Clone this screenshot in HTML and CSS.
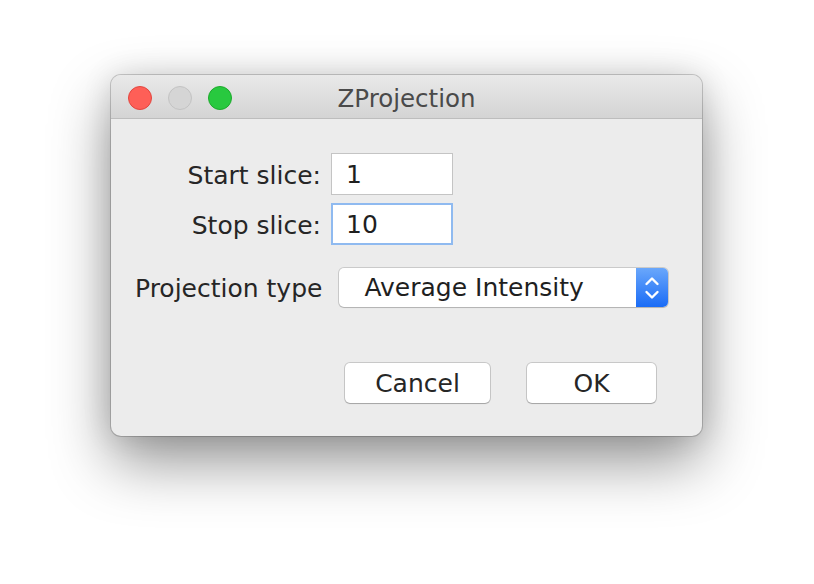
FILE: index.html
```html
<!DOCTYPE html>
<html>
<head>
<meta charset="utf-8">
<link rel="stylesheet" href="styles.css">
</head>
<body>
<div class="page">
  <div class="window">
    <div class="titlebar">
      <div class="lights">
        <span class="light red"></span>
        <span class="light grey"></span>
        <span class="light green"></span>
      </div>
      <div class="title">ZProjection</div>
    </div>
    <div class="content">
      <div class="slices">
        <label class="lbl">Start slice:</label>
        <div class="field">1</div>
        <label class="lbl">Stop slice:</label>
        <div class="field focus">10</div>
      </div>
      <div class="typerow">
        <span class="lbl">Projection type</span>
        <div class="select">
          <span class="select-text">Average Intensity</span>
          <span class="stepper">
            <svg width="16" height="28" viewBox="0 0 16 28"><path d="M2.5 10 L8 4.5 L13.5 10 M2.5 18 L8 23.5 L13.5 18" fill="none" stroke="#fff" stroke-width="2.4" stroke-linecap="round" stroke-linejoin="round"/></svg>
          </span>
        </div>
      </div>
      <div class="buttons">
        <button class="btn cancel">Cancel</button>
        <button class="btn ok">OK</button>
      </div>
    </div>
  </div>
</div>
</body>
</html>
```
FILE: styles.css
```css
html, body {
  margin: 0;
  padding: 0;
  background: #ffffff;
}
body {
  width: 814px;
  height: 584px;
  overflow: hidden;
  font-family: "DejaVu Sans", "Liberation Sans", sans-serif;
  color: #262626;
}
.page {
  padding: 75px 0 0 111px;
}
.window {
  width: 591px;
  height: 361px;
  box-sizing: border-box;
  background: #ececec;
  border-radius: 10px;
  box-shadow: 0 0 0 1px rgba(0,0,0,0.18), 0 26px 60px rgba(0,0,0,0.42), 0 0 30px rgba(0,0,0,0.12);
  overflow: hidden;
  display: flex;
  flex-direction: column;
}
.titlebar {
  height: 43px;
  flex: none;
  position: relative;
  background: linear-gradient(#e9e9e9, #d4d4d4);
  border-bottom: 1px solid #bdbdbd;
  display: flex;
  align-items: center;
  justify-content: center;
}
.lights {
  position: absolute;
  left: 17px;
  top: 11px;
  display: flex;
  gap: 16px;
}
.light {
  width: 24px;
  height: 24px;
  border-radius: 50%;
  box-sizing: border-box;
}
.red { background: #fe5f57; border: 1px solid #e2463f; }
.grey { background: #d5d5d5; border: 1px solid #c3c3c3; }
.green { background: #28c93f; border: 1px solid #1daa2c; }
.title {
  font-size: 24.5px;
  color: #4a4a4a;
  padding-top: 4px;
}
.content {
  padding-top: 34px;
}
.slices {
  display: grid;
  grid-template-columns: 210px 122px;
  column-gap: 10px;
  row-gap: 8px;
  align-items: center;
}
.lbl {
  font-size: 25px;
  color: #262626;
  text-align: right;
  white-space: nowrap;
  padding-top: 2px;
}
.field {
  height: 42px;
  box-sizing: border-box;
  background: #fff;
  border: 1px solid #c4c4c4;
  font-size: 25px;
  padding-left: 14px;
  padding-top: 1px;
  line-height: 40px;
  color: #1f1f1f;
}
.field.focus {
  border: 2px solid #8fbaf0;
  padding-left: 13px;
  line-height: 38px;
}
.typerow {
  margin-top: 23px;
  padding-left: 24px;
  display: flex;
  align-items: center;
  gap: 17px;
}
.typerow .lbl {
  text-align: left;
}
.select {
  width: 329px;
  height: 39px;
  box-sizing: border-box;
  background: #fff;
  border-radius: 5px;
  box-shadow: 0 0 0 1px rgba(0,0,0,0.14), 0 1px 1px rgba(0,0,0,0.12);
  display: flex;
  align-items: center;
  overflow: hidden;
}
.select-text {
  flex: 1;
  font-size: 25px;
  padding-left: 25px;
  color: #1f1f1f;
}
.stepper {
  width: 32px;
  height: 100%;
  background: linear-gradient(#6aa7fb, #1a6cf6);
  display: flex;
  align-items: center;
  justify-content: center;
}
.buttons {
  margin-top: 56px;
  padding-left: 234px;
  display: flex;
  gap: 37px;
}
.btn {
  height: 40px;
  background: #fff;
  border: none;
  border-radius: 5px;
  box-shadow: 0 0 0 1px rgba(0,0,0,0.15), 0 1px 1px rgba(0,0,0,0.18);
  font-family: "DejaVu Sans", "Liberation Sans", sans-serif;
  font-size: 25px;
  color: #262626;
  padding: 0;
}
.cancel { width: 145px; }
.ok { width: 129px; }
```
